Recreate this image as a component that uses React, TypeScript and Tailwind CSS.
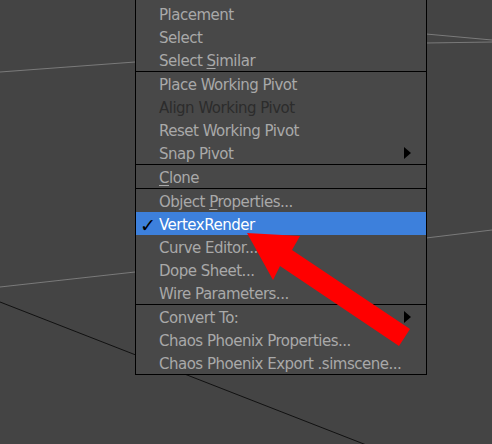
import { Fragment } from 'react'

type Item = {
  label: string
  u?: number
  disabled?: boolean
  checked?: boolean
  active?: boolean
  sub?: boolean
}

const groups: Item[][] = [
  [
    { label: 'Placement' },
    { label: 'Select' },
    { label: 'Select Similar', u: 7 },
  ],
  [
    { label: 'Place Working Pivot' },
    { label: 'Align Working Pivot', disabled: true },
    { label: 'Reset Working Pivot' },
    { label: 'Snap Pivot', sub: true },
  ],
  [{ label: 'Clone', u: 0 }],
  [
    { label: 'Object Properties...', u: 7 },
    { label: 'VertexRender', checked: true, active: true },
    { label: 'Curve Editor...' },
    { label: 'Dope Sheet...' },
    { label: 'Wire Parameters...' },
  ],
  [
    { label: 'Convert To:', sub: true },
    { label: 'Chaos Phoenix Properties...' },
    { label: 'Chaos Phoenix Export .simscene...' },
  ],
]

function Label({ item }: { item: Item }) {
  if (item.u === undefined) return <>{item.label}</>
  const i = item.u
  return (
    <>
      {item.label.slice(0, i)}
      <span className="underline underline-offset-2">{item.label[i]}</span>
      {item.label.slice(i + 1)}
    </>
  )
}

function Row({ item }: { item: Item }) {
  const color = item.active
    ? 'bg-[#3d80dc] text-white'
    : item.disabled
      ? 'text-[#2c2c2c]'
      : 'text-[#a9a9a9]'
  return (
    <div className={`flex h-[23px] items-center pt-[3px] ${color}`}>
      <span className="w-[23px] pl-[4px] text-[19px] leading-none font-bold text-black">
        {item.checked ? '✓' : ''}
      </span>
      <span className="flex-1 whitespace-nowrap">
        <Label item={item} />
      </span>
      {item.sub && (
        <span className="mr-[15px] mb-[3px] h-0 w-0 border-y-[6px] border-l-[7px] border-y-transparent border-l-black" />
      )}
    </div>
  )
}

export default function App() {
  return (
    <div
      className="relative h-[444px] w-[492px] overflow-hidden bg-[#444444]"
      style={{ fontFamily: '"DejaVu Sans", Tahoma, sans-serif' }}
    >
      {/* viewport grid lines */}
      <svg className="absolute inset-0" width="492" height="444">
        <line x1="0" y1="72" x2="135" y2="62" stroke="#7a7a7a" strokeWidth="1" />
        <line x1="426" y1="34" x2="492" y2="40" stroke="#7a7a7a" strokeWidth="1" />
        <line x1="426" y1="43" x2="492" y2="42" stroke="#7a7a7a" strokeWidth="1" />
        <line x1="0" y1="287" x2="135" y2="272" stroke="#7a7a7a" strokeWidth="1" />
        <line x1="426" y1="238" x2="492" y2="230" stroke="#7a7a7a" strokeWidth="1" />
        <line x1="0" y1="302" x2="492" y2="494" stroke="#111111" strokeWidth="1" />
      </svg>

      {/* context menu */}
      <div className="absolute left-[135px] top-0 w-[292px] border-x border-b border-black bg-[#484848] pt-[2px] text-[15px] tracking-[-0.5px]">
        {groups.map((g, gi) => (
          <Fragment key={gi}>
            {gi > 0 && <div className="h-px bg-black" />}
            {g.map((item) => (
              <Row key={item.label} item={item} />
            ))}
          </Fragment>
        ))}
      </div>

      {/* red annotation arrow */}
      <svg className="absolute inset-0" width="492" height="444">
        <polygon
          points="247,233 300,236 292,250 410,329 399,346 280,266 273,280"
          fill="#ff0000"
        />
      </svg>
    </div>
  )
}
